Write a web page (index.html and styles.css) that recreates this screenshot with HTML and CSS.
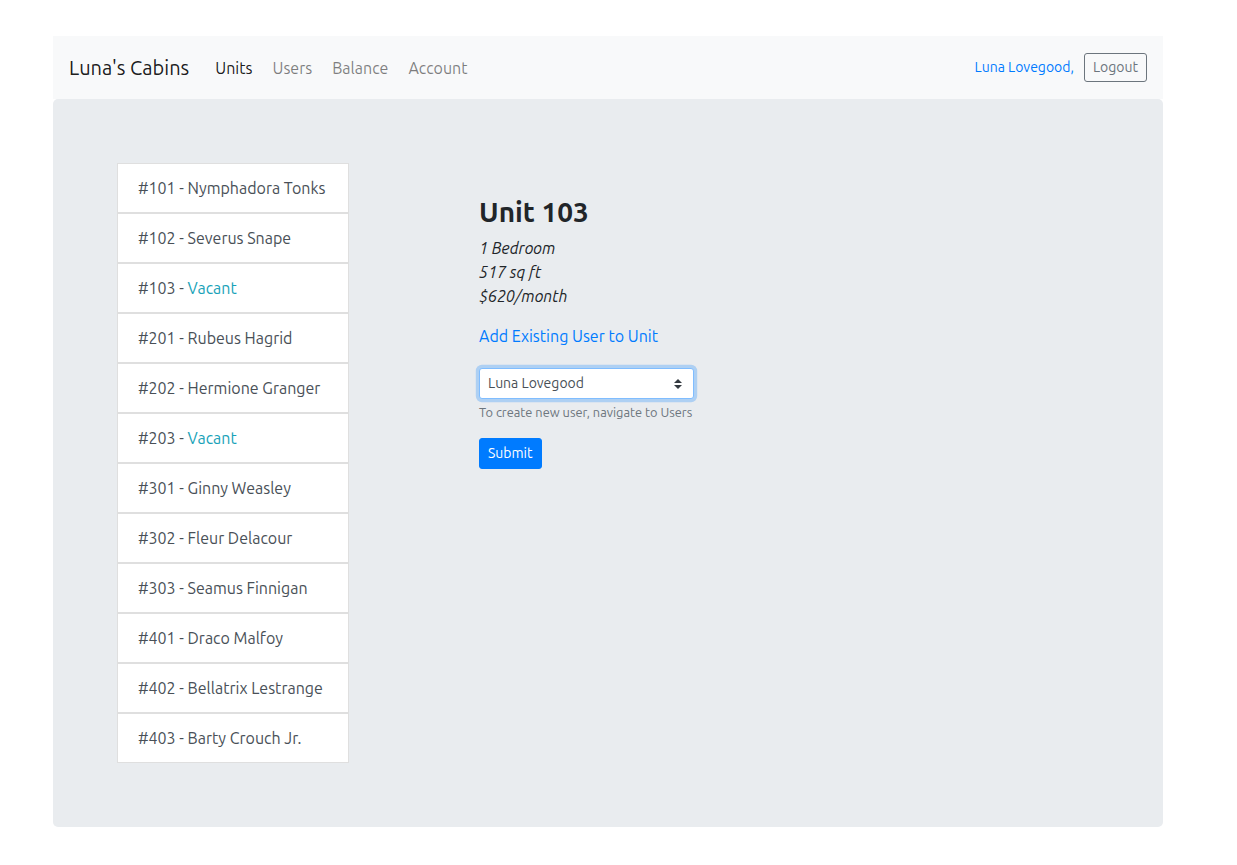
FILE: index.html
```html
<!DOCTYPE html>
<html lang="en">
<head>
<meta charset="utf-8">
<title>Luna's Cabins</title>
<link rel="stylesheet" href="styles.css">
</head>
<body>
<div class="page">
  <nav class="navbar">
    <a class="brand" href="#">Luna's Cabins</a>
    <ul class="nav">
      <li><a class="nav-link active" href="#">Units</a></li>
      <li><a class="nav-link" href="#">Users</a></li>
      <li><a class="nav-link" href="#">Balance</a></li>
      <li><a class="nav-link" href="#">Account</a></li>
    </ul>
    <div class="nav-right">
      <a class="user-link" href="#">Luna Lovegood,</a>
      <button class="btn-outline">Logout</button>
    </div>
  </nav>
  <main class="jumbotron">
    <div class="list-group">
      <a class="list-item" href="#">#101 - Nymphadora Tonks</a>
      <a class="list-item" href="#">#102 - Severus Snape</a>
      <a class="list-item" href="#">#103 - <span class="vacant">Vacant</span></a>
      <a class="list-item" href="#">#201 - Rubeus Hagrid</a>
      <a class="list-item" href="#">#202 - Hermione Granger</a>
      <a class="list-item" href="#">#203 - <span class="vacant">Vacant</span></a>
      <a class="list-item" href="#">#301 - Ginny Weasley</a>
      <a class="list-item" href="#">#302 - Fleur Delacour</a>
      <a class="list-item" href="#">#303 - Seamus Finnigan</a>
      <a class="list-item" href="#">#401 - Draco Malfoy</a>
      <a class="list-item" href="#">#402 - Bellatrix Lestrange</a>
      <a class="list-item" href="#">#403 - Barty Crouch Jr.</a>
    </div>
    <section class="detail">
      <h3 class="unit-title">Unit 103</h3>
      <p class="unit-info"><em>1 Bedroom</em><br><em>517 sq ft</em><br><em>$620/month</em></p>
      <a class="add-link" href="#">Add Existing User to Unit</a>
      <form class="user-form">
        <div class="form-group">
          <div class="select-wrap">
            <select class="select">
              <option>Luna Lovegood</option>
            </select>
            <svg class="select-arrow" width="8" height="10" viewBox="0 0 4 5" aria-hidden="true"><path fill="#343a40" d="M2 0L0 2h4zm0 5L0 3h4z"/></svg>
          </div>
          <small class="form-text">To create new user, navigate to Users</small>
        </div>
        <button type="button" class="btn-primary">Submit</button>
      </form>
    </section>
  </main>
</div>
</body>
</html>
```

FILE: styles.css
```css
* { box-sizing: border-box; }
html, body { margin: 0; padding: 0; background: #fff; }
body {
  font-family: "Ubuntu", "Noto Sans", "Open Sans", sans-serif;
  font-size: 16px;
  line-height: 1.5;
  color: #212529;
}
a { text-decoration: none; }

.page {
  width: 1110px;
  margin-left: 53px;
  padding-top: 36px;
}

.navbar {
  display: flex;
  align-items: center;
  height: 63px;
  padding: 0 16px;
  background: #f8f9fa;
}
.brand {
  font-size: 20px;
  line-height: 30px;
  color: rgba(0,0,0,.9);
  margin-right: 16px;
}
.nav {
  display: flex;
  list-style: none;
  margin: 0;
  padding: 0;
}
.nav-link {
  display: block;
  padding: 8px 10px;
  color: rgba(0,0,0,.5);
}
.nav-link.active { color: rgba(0,0,0,.9); }
.nav-right {
  margin-left: auto;
  display: flex;
  align-items: center;
  gap: 10px;
}
.user-link {
  font-size: 14px;
  color: #007bff;
}
.btn-outline {
  font-family: inherit;
  font-size: 14px;
  line-height: 1.5;
  padding: 3px 8px;
  border: 1px solid #6c757d;
  border-radius: 3px;
  background: transparent;
  color: #6c757d;
}

.jumbotron {
  display: flex;
  align-items: flex-start;
  background: #e9ecef;
  border-radius: 5px;
  padding: 64px;
}

.list-group {
  width: 232px;
  display: flex;
  flex-direction: column;
}
.list-item {
  display: block;
  height: 50px;
  padding: 12px 20px;
  background: #fff;
  border: 1px solid #dfdfdf;
  color: #495057;
}
.vacant { color: #17a2b8; }

.detail {
  margin-left: 130px;
  padding-top: 32px;
}
.unit-title {
  margin: 0 0 7px;
  font-size: 28px;
  font-weight: 600;
  line-height: 1.2;
}
.unit-info {
  margin: 0 0 16px;
}
.add-link {
  display: block;
  color: #007bff;
  margin-bottom: 20px;
}
.form-group { margin-bottom: 16px; }
.select-wrap {
  position: relative;
  width: 215px;
}
.select {
  display: block;
  width: 100%;
  height: 31px;
  padding: 4px 24px 4px 8px;
  font-family: inherit;
  font-size: 14px;
  color: #495057;
  background: #fff;
  border: 1px solid #80bdff;
  border-radius: 3px;
  box-shadow: 0 0 0 3.2px rgba(0,123,255,.25);
  -webkit-appearance: none;
  appearance: none;
  outline: none;
}
.select-arrow {
  position: absolute;
  right: 12px;
  top: 11px;
}
.form-text {
  display: block;
  margin-top: 4px;
  font-size: 12.8px;
  color: #6c757d;
}
.btn-primary {
  font-family: inherit;
  font-size: 14px;
  line-height: 1.5;
  padding: 4px 8px;
  color: #fff;
  background: #007bff;
  border: 1px solid #007bff;
  border-radius: 3px;
}
```
